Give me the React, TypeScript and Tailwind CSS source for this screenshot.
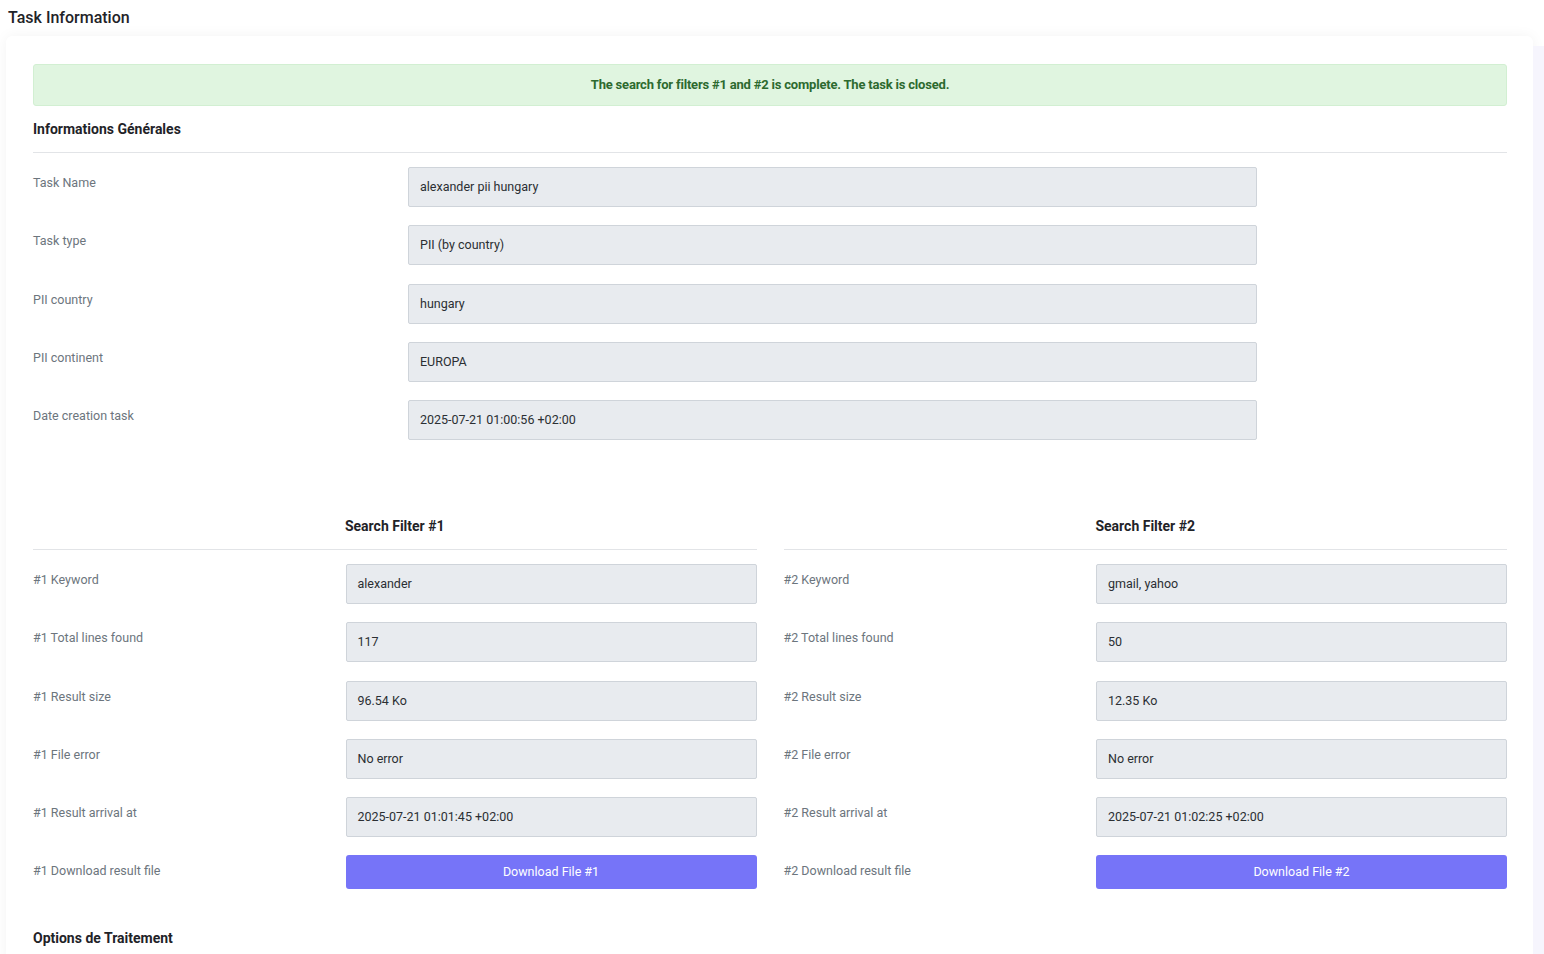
import React from 'react';

const general = [
    { label: 'Task Name', value: 'alexander pii hungary' },
    { label: 'Task type', value: 'PII (by country)' },
    { label: 'PII country', value: 'hungary' },
    { label: 'PII continent', value: 'EUROPA' },
    { label: 'Date creation task', value: '2025-07-21 01:00:56 +02:00' },
];

const filters = [
    {
        n: 1,
        rows: [
            ['Keyword', 'alexander'],
            ['Total lines found', '117'],
            ['Result size', '96.54 Ko'],
            ['File error', 'No error'],
            ['Result arrival at', '2025-07-21 01:01:45 +02:00'],
        ],
    },
    {
        n: 2,
        rows: [
            ['Keyword', 'gmail, yahoo'],
            ['Total lines found', '50'],
            ['Result size', '12.35 Ko'],
            ['File error', 'No error'],
            ['Result arrival at', '2025-07-21 01:02:25 +02:00'],
        ],
    },
];

const Field = ({ value, width }: { value: string; width: string }) => (
    <div className={`${width} h-[40px] flex items-center px-[11px] pt-[1px] bg-[#e8ebef] border border-[#cfd4da] rounded-[2px] text-[12.5px] text-[#2b2f33]`}>
        {value}
    </div>
);

export default function App() {
    return (
        <div className="min-h-screen bg-white font-['Roboto',sans-serif] text-[#212529]">
            {/* PAGE TITLE */}
            <h1 className="px-2 pt-[6px] h-[36px] text-[16px] font-medium text-[#1f2328]">Task Information</h1>

            <div className="flex">
                {/* CARD */}
                <div className="ml-[6px] w-[1527px] bg-white rounded-md shadow-[0_0_14px_rgba(0,0,0,0.05)] pl-[27px] pr-[26px] pt-[28px] pb-4">
                    <div className="h-[42px] flex items-center justify-center bg-[#e0f5e0] border border-[#d2efd2] rounded-[3px] text-[13px] font-bold text-[#2d6a2f] tracking-[-0.2px]">
                        The search for filters #1 and #2 is complete. The task is closed.
                    </div>

                    <h2 className="mt-[13px] text-[14px] font-bold text-[#1f2328]">Informations Générales</h2>
                    <div className="mt-[12px] border-t border-[#e2e4e7]" />

                    <div className="mt-[14px] flex flex-col gap-[18.25px]">
                        {general.map(row => (
                            <div key={row.label} className="flex">
                                <div className="w-[375px] pt-[7px] text-[12.5px] text-[#6c757d]">{row.label}</div>
                                <Field value={row.value} width="w-[849px]" />
                            </div>
                        ))}
                    </div>

                    {/* SEARCH FILTERS */}
                    <div className="mt-[76px] flex gap-[27px]">
                        {filters.map(f => (
                            <div key={f.n} className="flex-1">
                                <h3 className="text-center text-[14px] font-bold text-[#1f2328]">Search Filter #{f.n}</h3>
                                <div className="mt-[12px] border-t border-[#e2e4e7]" />
                                <div className="mt-[14px] flex flex-col gap-[18.25px]">
                                    {f.rows.map(([label, value]) => (
                                        <div key={label} className="flex">
                                            <div className="flex-1 pt-[7px] text-[12.5px] text-[#6c757d]">#{f.n} {label}</div>
                                            <Field value={value} width="w-[411px]" />
                                        </div>
                                    ))}
                                    <div className="flex">
                                        <div className="flex-1 pt-[7px] text-[12.5px] text-[#6c757d]">#{f.n} Download result file</div>
                                        <button className="w-[411px] h-[34px] bg-[#7674f8] rounded-[3px] text-[12.5px] text-white">
                                            Download File #{f.n}
                                        </button>
                                    </div>
                                </div>
                            </div>
                        ))}
                    </div>

                    <h2 className="mt-[39px] text-[14px] font-bold text-[#1f2328]">Options de Traitement</h2>
                </div>

                {/* RIGHT STRIP */}
                <div className="mt-[10px] flex-1 bg-[#f6f5fd]" />
            </div>
        </div>
    );
}
